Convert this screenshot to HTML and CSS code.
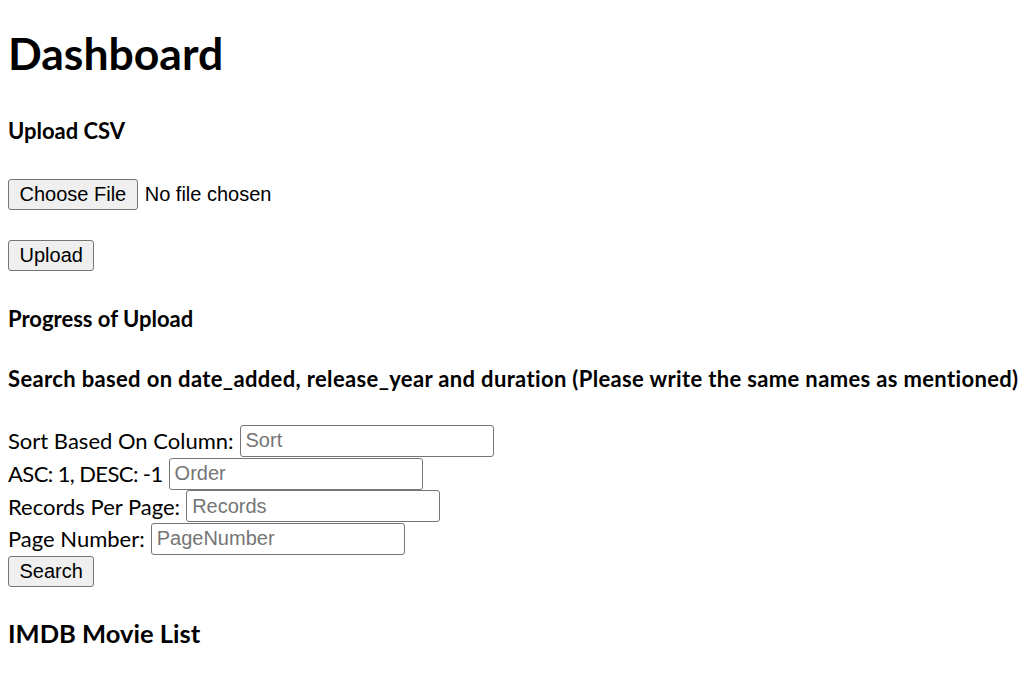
FILE: index.html
```html
<!DOCTYPE html>
<html lang="en">
<head>
<meta charset="utf-8">
<title>Dashboard</title>
<link rel="stylesheet" href="styles.css">
</head>
<body>
<h1 class="title">Dashboard</h1>
<h4 class="heading h-upload">Upload CSV</h4>
<div class="file-row">
  <button class="btn" type="button">Choose File</button>
  <span class="file-status">No file chosen</span>
</div>
<div class="upload-row">
  <button class="btn" type="button">Upload</button>
</div>
<h4 class="heading h-progress">Progress of Upload</h4>
<h4 class="heading h-search">Search based on date_added, release_year and duration (Please write the same names as mentioned)</h4>
<form class="search-form">
  <div class="field"><label>Sort Based On Column:</label><input class="input" type="text" placeholder="Sort"></div>
  <div class="field"><label class="label-order">ASC: 1, DESC: -1</label><input class="input" type="text" placeholder="Order"></div>
  <div class="field"><label>Records Per Page:</label><input class="input" type="text" placeholder="Records"></div>
  <div class="field"><label>Page Number:</label><input class="input" type="text" placeholder="PageNumber"></div>
  <div class="field"><button class="btn" type="button">Search</button></div>
</form>
<h3 class="list-title">IMDB Movie List</h3>
</body>
</html>
```
FILE: styles.css
```css
html, body {
  margin: 0;
  padding: 0;
  background: #ffffff;
}
body {
  padding: 0 8px;
  font-family: Lato, "Open Sans", sans-serif;
  color: #000;
}
.title {
  margin: 25px 0 0;
  font-size: 44.5px;
  line-height: 56px;
  font-weight: 700;
}
.heading {
  margin: 0;
  font-size: 22px;
  line-height: 28px;
  font-weight: 700;
}
.h-upload { margin-top: 35.5px; }
.h-progress { margin-top: 33.5px; }
.h-search {
  margin-top: 32px;
  white-space: nowrap;
  letter-spacing: 0.35px;
}
.file-row {
  margin-top: 33.5px;
  height: 32px;
  display: flex;
  align-items: center;
  gap: 7px;
}
.upload-row {
  margin-top: 29px;
  height: 32px;
  display: flex;
  align-items: center;
}
.btn {
  height: 31px;
  padding: 0 10.5px;
  border: 1px solid #767676;
  border-radius: 3px;
  background: #efefef;
  color: #000;
  font-family: "Liberation Sans", Arial, sans-serif;
  font-size: 20px;
}
.file-status {
  font-family: "Liberation Sans", Arial, sans-serif;
  font-size: 20px;
}
.search-form {
  margin-top: 32px;
  display: flex;
  flex-direction: column;
}
.field {
  height: 32.7px;
  display: flex;
  align-items: center;
  gap: 6px;
  font-size: 22px;
}
.label-order { letter-spacing: -0.6px; }
.input {
  box-sizing: border-box;
  width: 254px;
  height: 32px;
  padding: 0 5px;
  border: 1px solid #767676;
  border-radius: 3px;
  font-family: "Liberation Sans", Arial, sans-serif;
  font-size: 20px;
  color: #000;
}
.input::placeholder { color: #757575; }
.list-title {
  margin: 29px 0 0;
  font-size: 25.5px;
  line-height: 32px;
  font-weight: 700;
}
```
